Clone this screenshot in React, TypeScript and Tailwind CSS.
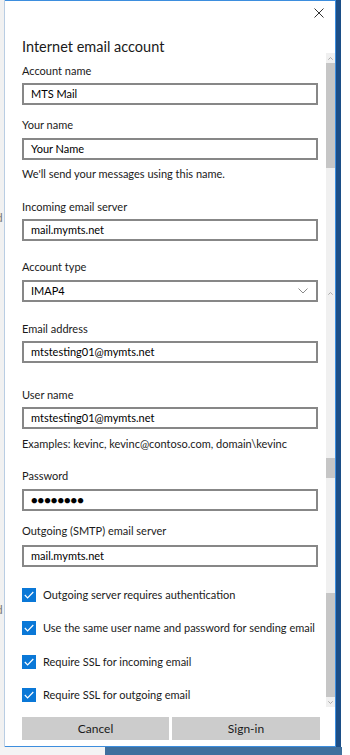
import React from 'react';

const font = { fontFamily: 'Lato, "Open Sans", sans-serif' };

const Label = ({ text, mt }: { text: string; mt: string }) => (
  <div className={`${mt} h-[16px] leading-[16px] text-[11px] text-[#1a1a1a] whitespace-nowrap`}>{text}</div>
);

const Box = ({ value, mt, select }: { value: string; mt: string; select?: boolean }) => (
  <div className={`${mt} h-[22px] border-2 border-[#878787] bg-white flex items-center pl-[7px] pr-[8px] text-[11px] text-black`}>
    <span className="flex-1 whitespace-nowrap">{value}</span>
    {select && (
      <svg width="10" height="6" viewBox="0 0 10 6" fill="none" stroke="#8a8a8a" strokeWidth="1">
        <path d="M0.5 0.5 L5 5 L9.5 0.5" />
      </svg>
    )}
  </div>
);

const Check = ({ text, mt }: { text: string; mt: string }) => (
  <div className={`${mt} h-[14px] flex items-center gap-[7px]`}>
    <div className="w-[14px] h-[14px] bg-[#0a78d7] flex items-center justify-center shrink-0">
      <svg width="10" height="8" viewBox="0 0 10 8" fill="none" stroke="white" strokeWidth="1.2">
        <path d="M0.8 4 L3.6 6.8 L9.3 1" />
      </svg>
    </div>
    <span className="text-[11px] text-[#1a1a1a] whitespace-nowrap leading-[16px]">{text}</span>
  </div>
);

const Scrollbar = () => (
  <div className="mt-[28px] w-[9px] h-[654px] bg-[#f0f0f0] flex flex-col shrink-0">
    <div className="h-[10px] flex items-center justify-center">
      <svg width="5" height="3" viewBox="0 0 5 3" fill="none" stroke="#9a9a9a" strokeWidth="0.8"><path d="M0.3 2.7 L2.5 0.5 L4.7 2.7" /></svg>
    </div>
    <div className="h-[105px] bg-[#c6c6c6]" />
    <div className="h-[121px]" />
    <div className="h-[8px] flex items-center justify-center">
      <svg width="5" height="3" viewBox="0 0 5 3" fill="none" stroke="#9a9a9a" strokeWidth="0.8"><path d="M0.3 2.7 L2.5 0.5 L4.7 2.7" /></svg>
    </div>
    <div className="h-[161px]" />
    <div className="h-[20px] bg-[#c6c6c6]" />
    <div className="h-[115px]" />
    <div className="h-[104px] bg-[#c6c6c6]" />
    <div className="h-[10px] flex items-center justify-center">
      <svg width="5" height="3" viewBox="0 0 5 3" fill="none" stroke="#9a9a9a" strokeWidth="0.8"><path d="M0.3 0.3 L2.5 2.5 L4.7 0.3" /></svg>
    </div>
  </div>
);

export default function App() {
  return (
    <div className="w-[350px] h-[755px] overflow-hidden bg-white flex flex-col" style={font}>
      <div className="flex h-[747px]">
        {/* window behind, left edge */}
        <div className="w-[5px] bg-[#f1f1f1] border-r border-[#b9cde3] overflow-hidden flex flex-col">
          <div className="mt-[210px] -ml-[4px] text-[12px] leading-[16px] text-[#7a7a7a]">d</div>
          <div className="mt-[376px] -ml-[4px] text-[12px] leading-[16px] text-[#7a7a7a]">d</div>
        </div>

        {/* dialog */}
        <div className="w-[331px] border-y border-r border-[#3d8ede] bg-white flex flex-col">
          <div className="h-[24px] flex items-center justify-end pr-[11px]">
            <svg width="10" height="10" viewBox="0 0 10 10" stroke="#333" strokeWidth="1">
              <path d="M0.5 0.5 L9.5 9.5 M9.5 0.5 L0.5 9.5" />
            </svg>
          </div>

          <div className="flex items-start">
            <div className="pl-[17px] w-[313px] flex flex-col">
              <div className="mt-[12px] h-[20px] leading-[20px] text-[14.5px] text-[#1a1a1a]">Internet email account</div>

              <Label text="Account name" mt="mt-[6px]" />
              <Box value="MTS Mail" mt="mt-[4px]" />

              <Label text="Your name" mt="mt-[12px]" />
              <Box value="Your Name" mt="mt-[5px]" />
              <Label text="We'll send your messages using this name." mt="mt-[6px]" />

              <Label text="Incoming email server" mt="mt-[17px]" />
              <Box value="mail.mymts.net" mt="mt-[4px]" />

              <Label text="Account type" mt="mt-[18px]" />
              <Box value="IMAP4" mt="mt-[5px]" select />

              <Label text="Email address" mt="mt-[19px]" />
              <Box value="mtstesting01@mymts.net" mt="mt-[4px]" />

              <Label text="User name" mt="mt-[24px]" />
              <Box value="mtstesting01@mymts.net" mt="mt-[4px]" />
              <Label text="Examples: kevinc, kevinc@contoso.com, domain\kevinc" mt="mt-[7px]" />

              <Label text="Password" mt="mt-[16px]" />
              <Box value="●●●●●●●●" mt="mt-[5px]" />

              <Label text="Outgoing (SMTP) email server" mt="mt-[12px]" />
              <Box value="mail.mymts.net" mt="mt-[6px]" />

              <Check text="Outgoing server requires authentication" mt="mt-[21px]" />
              <Check text="Use the same user name and password for sending email" mt="mt-[19px]" />
              <Check text="Require SSL for incoming email" mt="mt-[20px]" />
              <Check text="Require SSL for outgoing email" mt="mt-[19px]" />
            </div>
            <div className="w-[8px]" />
            <Scrollbar />
          </div>

          <div className="mt-[10px] pl-[17px] flex gap-[3px]">
            <button className="w-[147px] h-[23px] bg-[#cccccc] text-[12px] text-[#1a1a1a]">Cancel</button>
            <button className="w-[148px] h-[23px] bg-[#cccccc] text-[12px] text-[#1a1a1a]">Sign-in</button>
          </div>
        </div>

        {/* desktop behind, right */}
        <div className="w-[5px] bg-[#1c4e87]" />
        <div className="flex-1 bg-white" />
      </div>

      <div className="flex h-[8px]">
        <div className="w-[105px] bg-[#f4f4f4]" />
        <div className="w-[237px] bg-[#3f6f9d]" />
        <div className="flex-1 bg-white" />
      </div>
    </div>
  );
}
